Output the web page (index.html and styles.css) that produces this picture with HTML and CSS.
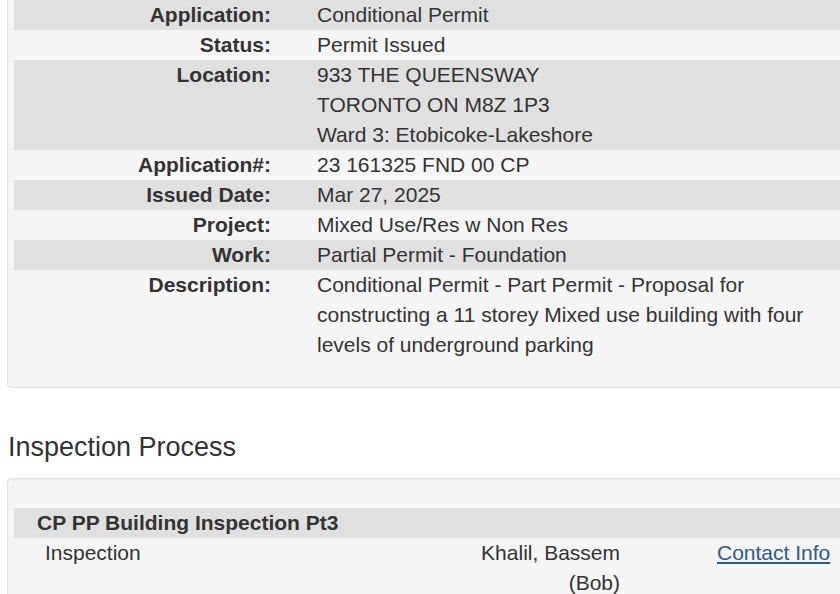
FILE: index.html
```html
<!DOCTYPE html>
<html>
<head>
<meta charset="utf-8">
<link rel="stylesheet" href="styles.css">
</head>
<body>
<div class="page">
  <div class="well well-top">
    <div class="row gray"><div class="lbl">Application:</div><div class="val">Conditional Permit</div></div>
    <div class="row"><div class="lbl">Status:</div><div class="val">Permit Issued</div></div>
    <div class="row gray"><div class="lbl">Location:</div><div class="val">933 THE QUEENSWAY<br>TORONTO ON M8Z 1P3<br>Ward 3: Etobicoke-Lakeshore</div></div>
    <div class="row"><div class="lbl">Application#:</div><div class="val">23 161325 FND 00 CP</div></div>
    <div class="row gray"><div class="lbl">Issued Date:</div><div class="val">Mar 27, 2025</div></div>
    <div class="row"><div class="lbl">Project:</div><div class="val">Mixed Use/Res w Non Res</div></div>
    <div class="row gray"><div class="lbl">Work:</div><div class="val">Partial Permit - Foundation</div></div>
    <div class="row"><div class="lbl">Description:</div><div class="val desc">Conditional Permit - Part Permit - Proposal for constructing a 11 storey Mixed use building with four levels of underground parking</div></div>
  </div>

  <h2 class="section-title">Inspection Process</h2>

  <div class="well well-bottom">
    <div class="insp-head">CP PP Building Inspection Pt3</div>
    <div class="insp-row">
      <div class="insp-type">Inspection</div>
      <div class="insp-name">Khalil, Bassem (Bob)</div>
      <div class="insp-link"><a href="#">Contact Info</a></div>
    </div>
  </div>
</div>
</body>
</html>
```

FILE: styles.css
```css
html, body {
  margin: 0;
  padding: 0;
  background: #ffffff;
  overflow: hidden;
}
body {
  font-family: "Liberation Sans", Arial, sans-serif;
  font-size: 21px;
  line-height: 30px;
  color: #333333;
}
.page {
  padding-left: 7px;
  margin-right: -30px;
}
.well {
  background: #f5f5f5;
  border: 1px solid #e3e3e3;
  border-radius: 4px;
  box-shadow: inset 0 1px 1px rgba(0,0,0,0.05);
  padding-left: 6px;
}
.well-top {
  margin-top: -20px;
  padding-top: 19px;
  padding-bottom: 27px;
}
.row {
  display: grid;
  grid-template-columns: 257px 1fr;
  column-gap: 46px;
}
.row.gray {
  background: #e0e0e0;
}
.lbl {
  text-align: right;
  font-weight: bold;
}
.desc {
  max-width: 520px;
}
.section-title {
  font-weight: normal;
  font-size: 27px;
  line-height: 32px;
  margin: 43px 0 0 1px;
}
.well-bottom {
  margin-top: 15px;
  padding-top: 29px;
  min-height: 200px;
}
.insp-head {
  background: #e0e0e0;
  font-weight: bold;
  padding-left: 23px;
}
.insp-row {
  display: grid;
  grid-template-columns: 420px 186px 1fr;
}
.insp-type {
  padding-left: 31px;
}
.insp-name {
  text-align: right;
}
.insp-link {
  padding-left: 97px;
}
.insp-link a {
  color: #2a5b8b;
  text-decoration: underline;
}
```
